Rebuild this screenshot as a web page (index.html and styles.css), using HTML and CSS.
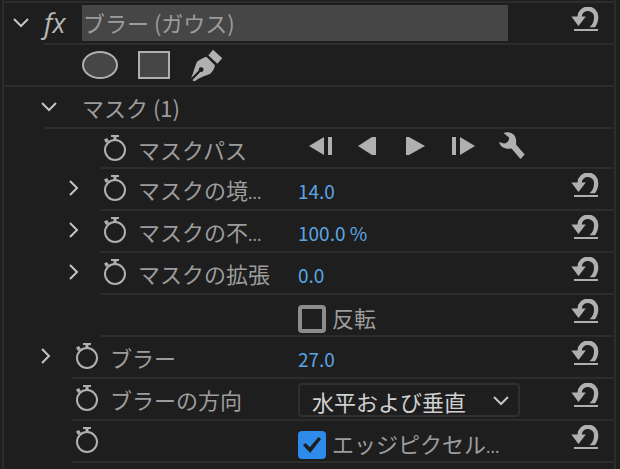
FILE: index.html
```
<!DOCTYPE html>
<html lang="ja">
<head>
    <meta charset="UTF-8">
    <meta name="viewport" content="width=device-width, initial-scale=1.0">
    <title>エフェクトコントロール</title>
    <link rel="stylesheet" href="styles.css">
</head>
<body>
    <!-- Shared icons -->
    <svg class="sprite" aria-hidden="true">
        <symbol id="reset" viewBox="0 0 28 24">
            <path d="M6.500 9.500A10.4 10.4 0 0 1 27.300 10.300C27.300 14.500 26 17.500 24 20.300H18.500C21.500 18 23 14.500 23 10.500A6.100 6.100 0 0 0 10.800 9.500H14.800L7.500 19 .3 9.500Z"/>
            <path d="M3 22h24v2H3z"/>
        </symbol>
        <symbol id="stopwatch" viewBox="0 0 24 26">
            <circle cx="12" cy="15" r="10" fill="none" stroke="currentColor" stroke-width="2"/>
            <path d="M8 0h8v2h-2.500v3h-3V2H8zM1 4.500L4 3l2 3-3 2z"/>
        </symbol>
        <symbol id="down" viewBox="0 0 24 24">
            <path d="M5 9l7 7 7-7" fill="none" stroke="currentColor" stroke-width="2"/>
        </symbol>
        <symbol id="right" viewBox="0 0 24 24">
            <path d="M9 5l7 7-7 7" fill="none" stroke="currentColor" stroke-width="2"/>
        </symbol>
    </svg>

    <main class="panel">
        <div class="row header line-1">
            <button class="twirl" aria-label="閉じる"><svg><use href="#down"/></svg></button>
            <span class="fx">fx</span>
            <h1 class="title">ブラー (ガウス)</h1>
            <button class="reset" aria-label="リセット"><svg><use href="#reset"/></svg></button>
        </div>

        <div class="row shapes">
            <button class="shape" aria-label="楕円形マスク">
                <svg width="36" height="28" viewBox="0 0 36 28"><ellipse cx="18" cy="14" rx="17" ry="13" fill="#464646" stroke="currentColor" stroke-width="2"/></svg>
            </button>
            <button class="shape" aria-label="長方形マスク">
                <svg width="32" height="28" viewBox="0 0 32 28"><path d="M1 1h30v26H1z" fill="#464646" stroke="currentColor" stroke-width="2"/></svg>
            </button>
            <button class="shape" aria-label="ペン">
                <svg width="33" height="33" viewBox="0 0 33 33">
                    <path d="M23 .7L32.300 9.300 27.300 14.700 18.300 6.300z"/>
                    <path d="M16.300 7.700L25 16.300C24.500 19.500 23 22.500 20.300 24.700 15.500 26.500 9.500 28.500 4.700 32.300L2.300 31.300 10.500 22.700A2.300 2.300 0 1 0 9 21.200L1 29.300C3.500 24 4.500 18 7 12.700 10 10.500 12.500 9 16.300 7.700z"/>
                </svg>
            </button>
        </div>

        <div class="row mask line-1">
            <button class="twirl" aria-label="閉じる"><svg><use href="#down"/></svg></button>
            <h2 class="label">マスク (1)</h2>
        </div>

        <div class="row prop nested path line-3">
            <div class="name">
                <button class="watch" aria-label="アニメーション"><svg><use href="#stopwatch"/></svg></button>
                <span class="label">マスクパス</span>
            </div>
            <div class="transport">
                <button aria-label="1フレーム逆方向にトラック"><svg viewBox="0 0 24 28"><path d="M1 14L16 5v18zM20 5h4v18h-4z"/></svg></button>
                <button aria-label="逆方向にトラック"><svg viewBox="0 0 24 28"><path d="M2 14L16 5h4v18h-4z"/></svg></button>
                <button aria-label="順方向にトラック"><svg viewBox="0 0 24 28"><path d="M2 5h3l16 9-16 9H2z"/></svg></button>
                <button aria-label="1フレーム順方向にトラック"><svg viewBox="0 0 24 28"><path d="M0 5h4v18H0zM8 5l15 9-15 9z"/></svg></button>
                <button aria-label="トラック方法"><svg viewBox="1 0 24 28"><path d="M0 10L5 11.500C7.500 11.500 10.500 9 10 5.500L4.500 1C7 0 9.500 0 11.500 .7 15.500 2 18 6 17 12.500L25.700 22.500 21.500 27 12.500 16.500C6.500 17.500 1.500 15.500 0 10z"/></svg></button>
            </div>
        </div>

        <div class="row prop nested line-3">
            <div class="name">
                <button class="twirl" aria-label="開く"><svg><use href="#right"/></svg></button>
                <button class="watch" aria-label="アニメーション"><svg><use href="#stopwatch"/></svg></button>
                <span class="label">マスクの境<span class="dots">...</span></span>
            </div>
            <a class="value" href="#">14.0</a>
            <button class="reset" aria-label="リセット"><svg><use href="#reset"/></svg></button>
        </div>

        <div class="row prop nested line-3">
            <div class="name">
                <button class="twirl" aria-label="開く"><svg><use href="#right"/></svg></button>
                <button class="watch" aria-label="アニメーション"><svg><use href="#stopwatch"/></svg></button>
                <span class="label">マスクの不<span class="dots">...</span></span>
            </div>
            <a class="value" href="#">100.0 %</a>
            <button class="reset" aria-label="リセット"><svg><use href="#reset"/></svg></button>
        </div>

        <div class="row prop nested line-3">
            <div class="name">
                <button class="twirl" aria-label="開く"><svg><use href="#right"/></svg></button>
                <button class="watch" aria-label="アニメーション"><svg><use href="#stopwatch"/></svg></button>
                <span class="label">マスクの拡張</span>
            </div>
            <a class="value" href="#">0.0</a>
            <button class="reset" aria-label="リセット"><svg><use href="#reset"/></svg></button>
        </div>

        <div class="row prop nested line-3">
            <div class="name"></div>
            <div class="check">
                <input type="checkbox" id="invert">
                <label for="invert">反転</label>
            </div>
            <button class="reset" aria-label="リセット"><svg><use href="#reset"/></svg></button>
        </div>

        <div class="row prop line-2">
            <div class="name">
                <button class="twirl" aria-label="開く"><svg><use href="#right"/></svg></button>
                <button class="watch" aria-label="アニメーション"><svg><use href="#stopwatch"/></svg></button>
                <span class="label">ブラー</span>
            </div>
            <a class="value" href="#">27.0</a>
            <button class="reset" aria-label="リセット"><svg><use href="#reset"/></svg></button>
        </div>

        <div class="row prop line-2">
            <div class="name">
                <button class="watch" aria-label="アニメーション"><svg><use href="#stopwatch"/></svg></button>
                <label class="label" for="direction">ブラーの方向</label>
            </div>
            <div class="dropdown">
                <select id="direction">
                    <option>水平および垂直</option>
                    <option>水平</option>
                    <option>垂直</option>
                </select>
                <svg><use href="#down"/></svg>
            </div>
            <button class="reset" aria-label="リセット"><svg><use href="#reset"/></svg></button>
        </div>

        <div class="row prop line-2">
            <div class="name">
                <button class="watch" aria-label="アニメーション"><svg><use href="#stopwatch"/></svg></button>
            </div>
            <div class="check">
                <input type="checkbox" id="edge" checked>
                <label for="edge">エッジピクセル<span class="dots">...</span></label>
            </div>
            <button class="reset" aria-label="リセット"><svg><use href="#reset"/></svg></button>
        </div>
    </main>
</body>
</html>
```
FILE: styles.css
```
* {
    margin: 0;
    padding: 0;
    box-sizing: border-box;
}

body {
    font-family: "Noto Sans CJK JP", sans-serif;
    font-size: 22px;
    line-height: 32px;
    background: #1e1e1e;
    color: #9c9c9c;
    padding: 0 4px 0 2px;
}

button {
    background: none;
    border: none;
    color: #b0b0b0;
    cursor: pointer;
    flex-shrink: 0;
}

svg {
    display: block;
    fill: currentColor;
}

.sprite {
    position: absolute;
    width: 0;
    height: 0;
}

.panel {
    min-height: 100vh;
    padding-top: 3px;
    border: 2px solid #2c2c2c;
    border-width: 0 2px;
    background: linear-gradient(#2c2c2c, #2c2c2c) 0 1px / 100% 2px no-repeat;
}

/* Each row draws its own separator, starting at its indent level */
.row {
    --indent: 0px;
    display: flex;
    align-items: flex-start;
    height: 42px;
    background: linear-gradient(#2c2c2c, #2c2c2c) right bottom / calc(100% - var(--indent)) 2px no-repeat;
}

.line-1 { --indent: 40px; }
.line-2 { --indent: 68px; }
.line-3 { --indent: 96px; }

.twirl,
.twirl svg {
    width: 24px;
    height: 24px;
}

.twirl {
    margin-top: 7px;
    color: #c4c4c4;
}

.reset {
    margin: 4px 15px 0 auto;
}

.reset svg {
    width: 28px;
    height: 24px;
}

.label {
    margin-top: 4px;
    font-size: 22px;
    font-weight: 400;
    white-space: nowrap;
}

.dots {
    font-size: 16px;
}

/* Effect header */
.header {
    padding-left: 5px;
}

.fx {
    width: 38px;
    margin: 4px 0 0 11px;
    font-family: "Open Sans", sans-serif;
    font-size: 27px;
    font-style: italic;
    color: #b8b8b8;
}

.title {
    flex: 1;
    height: 36px;
    margin: 2px 63px 0 0;
    padding: 1px;
    background: #464646;
    font-size: 22px;
    font-weight: 400;
}

/* Mask shape tools */
.shapes {
    align-items: center;
    gap: 20px;
    padding: 0 0 2px 78px;
}

.mask {
    padding-left: 33px;
}

.mask .label {
    margin-left: 21px;
}

/* Properties */
.prop .name {
    display: flex;
    align-items: flex-start;
    justify-content: flex-start;
    width: 294px;
    padding-left: 71px;
    flex-shrink: 0;
}

.nested .name {
    padding-left: 99px;
}

.name .twirl {
    margin-left: -42px;
    margin-right: 18px;
}

.watch {
    margin: 6px 11px 0 0;
}

.watch svg {
    width: 24px;
    height: 26px;
}

.path {
    height: 40px;
}

.transport {
    display: flex;
    gap: 24px;
    padding: 3px 0 0 10px;
}

.transport svg {
    width: 24px;
    height: 28px;
    overflow: visible;
}

.value {
    margin-top: 6px;
    font-size: 19px;
    color: #5aa5e3;
    text-decoration: none;
}

.check {
    display: flex;
    gap: 6px;
    padding-top: 6px;
}

.check input {
    appearance: none;
    width: 28px;
    height: 28px;
    margin-top: 4px;
    border: 4px solid #8c8c8c;
    border-radius: 4px;
}

.check input:checked {
    display: grid;
    place-items: center;
    border: none;
    background: #2f8bea;
}

.check input:checked::after {
    content: "";
    width: 18px;
    height: 16px;
    background: #1e1e1e;
    clip-path: polygon(0 52%, 14% 38%, 38% 64%, 86% 0, 100% 12%, 40% 100%);
}

.dropdown {
    position: relative;
    flex: 0 1 222px;
    margin-top: 4px;
}

.dropdown select {
    appearance: none;
    width: 100%;
    height: 34px;
    padding: 0 40px 0 12px;
    border: 2px solid #303030;
    border-radius: 4px;
    background: #1e1e1e;
    color: #d0d0d0;
    font: inherit;
}

.dropdown svg {
    position: absolute;
    top: 5px;
    right: 7px;
    width: 24px;
    height: 24px;
    color: #c4c4c4;
    pointer-events: none;
}
```
